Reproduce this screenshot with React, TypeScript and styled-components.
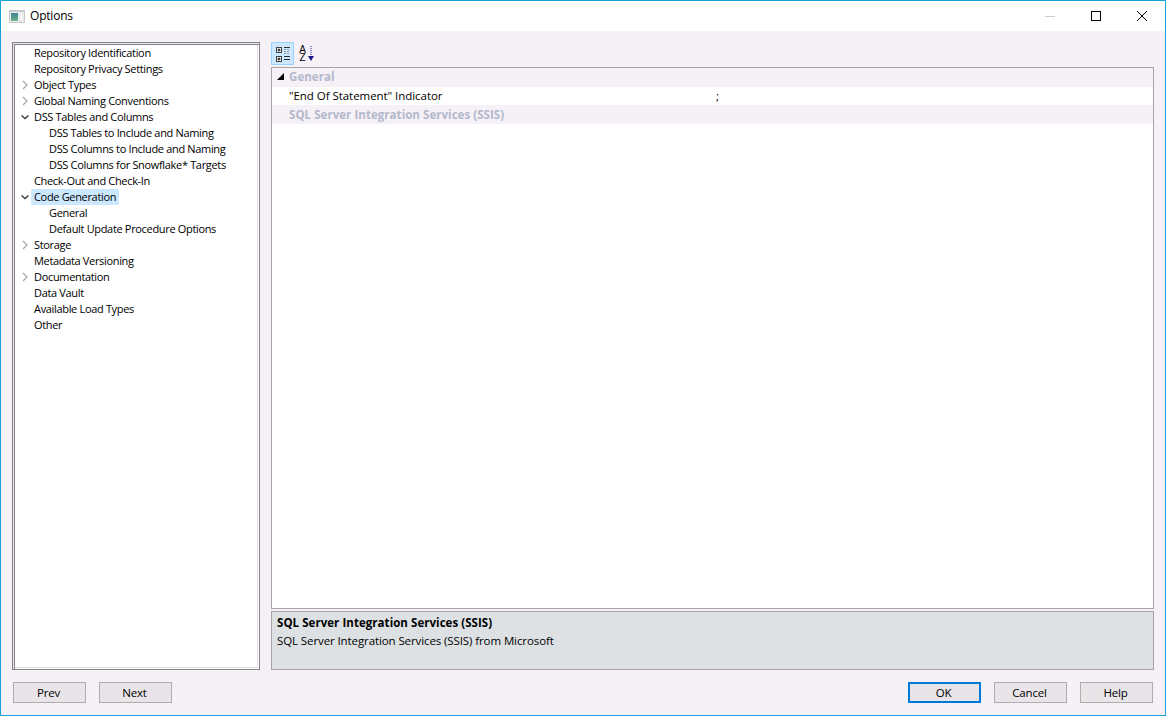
import { createGlobalStyle, styled } from 'styled-components';

const GlobalStyle = createGlobalStyle`
  html, body {
    margin: 0;
    padding: 0;
    background: #f5f1f6;
  }
  * {
    box-sizing: border-box;
  }
`;

const treeItems = [
  { label: 'Repository Identification', level: 0 },
  { label: 'Repository Privacy Settings', level: 0 },
  { label: 'Object Types', level: 0, arrow: 'closed' },
  { label: 'Global Naming Conventions', level: 0, arrow: 'closed' },
  { label: 'DSS Tables and Columns', level: 0, arrow: 'open' },
  { label: 'DSS Tables to Include and Naming', level: 1 },
  { label: 'DSS Columns to Include and Naming', level: 1 },
  { label: 'DSS Columns for Snowflake* Targets', level: 1 },
  { label: 'Check-Out and Check-In', level: 0 },
  { label: 'Code Generation', level: 0, arrow: 'open', selected: true },
  { label: 'General', level: 1 },
  { label: 'Default Update Procedure Options', level: 1 },
  { label: 'Storage', level: 0, arrow: 'closed' },
  { label: 'Metadata Versioning', level: 0 },
  { label: 'Documentation', level: 0, arrow: 'closed' },
  { label: 'Data Vault', level: 0 },
  { label: 'Available Load Types', level: 0 },
  { label: 'Other', level: 0 },
];

export default function App() {
  return (
    <Window>
      <GlobalStyle />
      <TitleBar>
        <AppIcon width="16" height="13" viewBox="0 0 16 13">
          <defs>
            <linearGradient id="panel" x1="0" y1="0" x2="0" y2="1">
              <stop offset="0" stopColor="#3d7f96" />
              <stop offset="1" stopColor="#6fb58a" />
            </linearGradient>
          </defs>
          <rect x="0" y="0" width="16" height="13" fill="#c8c8c8" />
          <rect x="1" y="2" width="14" height="10" fill="#eeeeee" />
          <rect x="2" y="3" width="7" height="8" fill="url(#panel)" />
          <rect x="11" y="3" width="3" height="8" fill="#f8f8f8" stroke="#d8d8d8" strokeWidth="0.5" />
        </AppIcon>
        <TitleText>Options</TitleText>
        <WindowControls>
          <ControlButton>
            <svg width="12" height="12" viewBox="0 0 12 12">
              <path d="M1 6.5h10" stroke="#cccccc" fill="none" />
            </svg>
          </ControlButton>
          <ControlButton>
            <svg width="12" height="12" viewBox="0 0 12 12">
              <rect x="1.5" y="1.5" width="9" height="9" stroke="#000000" fill="none" />
            </svg>
          </ControlButton>
          <ControlButton>
            <svg width="12" height="12" viewBox="0 0 12 12">
              <path d="M1 1l10 10M11 1L1 11" stroke="#000000" fill="none" />
            </svg>
          </ControlButton>
        </WindowControls>
      </TitleBar>

      <Body>
        <Tree>
          {treeItems.map((item) => (
            <TreeRow key={item.label} $level={item.level}>
              <ArrowSlot>
                {item.arrow === 'closed' && (
                  <svg width="8" height="10" viewBox="0 0 8 10">
                    <path d="M2 1l4 4-4 4" stroke="#a6a6a6" strokeWidth="1.2" fill="none" />
                  </svg>
                )}
                {item.arrow === 'open' && (
                  <svg width="10" height="8" viewBox="0 0 10 8">
                    <path d="M1.5 2.5L5 5.5l3.5-3" stroke="#404040" strokeWidth="1.5" fill="none" />
                  </svg>
                )}
              </ArrowSlot>
              <TreeLabel $selected={item.selected}>{item.label}</TreeLabel>
            </TreeRow>
          ))}
        </Tree>

        <RightColumn>
          <Toolbar>
            <ToolButton $active>
              <svg width="16" height="16" viewBox="0 0 16 16">
                <rect x="1.5" y="1.5" width="5" height="5" fill="#ffffff" stroke="#404040" />
                <path d="M2.5 4h3M4 2.5v3" stroke="#000000" />
                <rect x="1.5" y="10.5" width="5" height="5" fill="#ffffff" stroke="#404040" />
                <path d="M2.5 13h3M4 11.5v3" stroke="#000000" />
                <path d="M9 1.5h6" stroke="#303030" />
                <path d="M9 3.5h6M9 5.5h6M9 7.5h6" stroke="#9a9a9a" strokeDasharray="2 1" />
                <path d="M9 10.5h6" stroke="#303030" />
                <path d="M9 13.5h6" stroke="#202020" />
              </svg>
            </ToolButton>
            <ToolButton>
              <SortLetters>
                <span>A</span>
                <span>Z</span>
              </SortLetters>
              <svg width="6" height="16" viewBox="0 0 6 16">
                <path d="M3 0v10" stroke="#1a1a8c" strokeDasharray="1 1" />
                <path d="M0 10h6l-3 5z" fill="#1a1a8c" />
              </svg>
            </ToolButton>
          </Toolbar>

          <Grid>
            <CategoryRow $raised>
              <CategoryArrow />
              <CategoryText>General</CategoryText>
            </CategoryRow>
            <PropertyRow>
              <PropertyName>"End Of Statement" Indicator</PropertyName>
              <PropertyValue>;</PropertyValue>
            </PropertyRow>
            <CategoryRow>
              <CategoryArrow $hidden />
              <CategoryText>SQL Server Integration Services (SSIS)</CategoryText>
            </CategoryRow>
          </Grid>

          <Description>
            <DescriptionTitle>SQL Server Integration Services (SSIS)</DescriptionTitle>
            <div>SQL Server Integration Services (SSIS) from Microsoft</div>
          </Description>
        </RightColumn>
      </Body>

      <Footer>
        <ButtonGroup>
          <DialogButton>Prev</DialogButton>
          <DialogButton>Next</DialogButton>
        </ButtonGroup>
        <ButtonGroup>
          <DialogButton $primary>OK</DialogButton>
          <DialogButton>Cancel</DialogButton>
          <DialogButton>Help</DialogButton>
        </ButtonGroup>
      </Footer>
    </Window>
  );
}

const Window = styled.div`
  width: 1166px;
  height: 716px;
  display: flex;
  flex-direction: column;
  background: #f5f1f6;
  border: 1px solid #17a2d8;
  font-family: "Open Sans", "Noto Sans", sans-serif;
  font-size: 11.5px;
  letter-spacing: -0.1px;
  color: #000000;
`;

const TitleBar = styled.div`
  height: 30px;
  flex: none;
  display: flex;
  align-items: center;
  background: #ffffff;
  padding-left: 8px;
`;

const AppIcon = styled.svg`
  margin-right: 5px;
`;

const TitleText = styled.div`
  font-size: 12px;
  letter-spacing: -0.2px;
  flex: 1;
  padding-bottom: 2px;
`;

const WindowControls = styled.div`
  display: flex;
`;

const ControlButton = styled.div`
  width: 46px;
  height: 30px;
  display: flex;
  align-items: center;
  justify-content: center;
`;

const Body = styled.div`
  display: flex;
  gap: 11px;
  padding: 11px 11px 0 11px;
  height: 639px;
  flex: none;
`;

const Tree = styled.div`
  width: 248px;
  height: 628px;
  flex: none;
  background: #ffffff;
  border: 1px solid #85828a;
  box-shadow: inset 1px 1px 0 #e8e6ea, inset 2px 2px 0 #85828a, inset -1px -1px 0 #ffffff, inset -2px -2px 0 #e0e0e0;
  padding: 2px 0 0 3px;
  font-size: 11px;
  letter-spacing: -0.33px;
`;

const TreeRow = styled.div<{ $level: number }>`
  height: 16px;
  display: flex;
  align-items: center;
  padding-left: ${(p) => p.$level * 15}px;
`;

const ArrowSlot = styled.div`
  width: 18px;
  margin-right: -3px;
  display: flex;
  justify-content: center;
  align-items: center;
  flex: none;
`;

const TreeLabel = styled.div<{ $selected?: boolean }>`
  height: 16px;
  line-height: 16px;
  padding: 0 3px;
  background: ${(p) => (p.$selected ? '#cce8ff' : 'transparent')};
  white-space: nowrap;
`;

const RightColumn = styled.div`
  flex: 1;
  height: 628px;
  display: flex;
  flex-direction: column;
`;

const Toolbar = styled.div`
  height: 25px;
  flex: none;
  display: flex;
  gap: 1px;
`;

const ToolButton = styled.div<{ $active?: boolean }>`
  width: 23px;
  height: 23px;
  display: flex;
  align-items: center;
  justify-content: center;
  background: ${(p) => (p.$active ? '#cce8ff' : 'transparent')};
  border: 1px solid ${(p) => (p.$active ? '#99d1ff' : 'transparent')};
`;

const SortLetters = styled.div`
  display: flex;
  flex-direction: column;
  align-items: center;
  font-family: "Liberation Sans", sans-serif;
  font-size: 10px;
  line-height: 8px;
  letter-spacing: 0;
  margin-right: 2px;
`;

const Grid = styled.div`
  height: 542px;
  flex: none;
  background: #ffffff;
  border: 1px solid #a6a4a8;
`;

const CategoryRow = styled.div<{ $raised?: boolean }>`
  height: 19px;
  display: flex;
  align-items: center;
  background: #f5f1f6;
  padding-bottom: ${(p) => (p.$raised ? '2px' : '0')};
`;

const CategoryArrow = styled.div<{ $hidden?: boolean }>`
  width: 0;
  height: 0;
  margin: 0 5px 0 5px;
  border-style: solid;
  border-width: 0 0 7px 7px;
  border-color: transparent transparent ${(p) => (p.$hidden ? 'transparent' : '#000000')} transparent;
`;

const CategoryText = styled.div`
  font-weight: bold;
  color: #b4b8cc;
  letter-spacing: 0.05px;
`;

const PropertyRow = styled.div`
  height: 18px;
  display: flex;
  align-items: center;
  background: #ffffff;
  margin-left: 15px;
  padding-bottom: 2px;
  letter-spacing: -0.05px;
`;

const PropertyName = styled.div`
  width: 428px;
  padding-left: 2px;
  flex: none;
`;

const PropertyValue = styled.div`
  padding-left: 1px;
`;

const Description = styled.div`
  margin-top: 2px;
  height: 59px;
  flex: none;
  background: #dde1e4;
  border: 1px solid #a6a4a8;
  padding: 2px 5px;
  line-height: 18px;
`;

const DescriptionTitle = styled.div`
  font-weight: bold;
  letter-spacing: 0.05px;
`;

const Footer = styled.div`
  display: flex;
  justify-content: space-between;
  padding: 12px 12px 0 12px;
`;

const ButtonGroup = styled.div`
  display: flex;
  gap: 13px;
`;

const DialogButton = styled.div<{ $primary?: boolean }>`
  width: 73px;
  height: 21px;
  display: flex;
  align-items: center;
  justify-content: center;
  padding-right: 2px;
  background: #e8e4e8;
  border: ${(p) => (p.$primary ? '2px solid #0078d7' : '1px solid #adadad')};
  letter-spacing: -0.2px;
`;
